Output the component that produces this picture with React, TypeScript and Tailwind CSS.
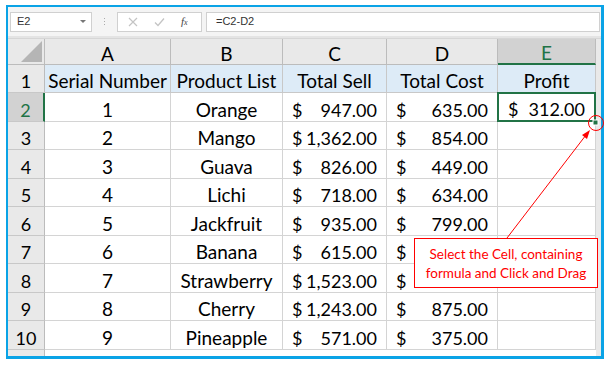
import React from 'react';

const cols = [
  { key: 'A', w: 'w-[126px]' },
  { key: 'B', w: 'w-[112px]' },
  { key: 'C', w: 'w-[104px]' },
  { key: 'D', w: 'w-[111px]' },
  { key: 'E', w: 'w-[98px]' },
];

// cost for Banana / Strawberry sits under the callout, so it is left blank
const rows = [
  { n: 1, name: 'Orange', sell: '947.00', cost: '635.00' },
  { n: 2, name: 'Mango', sell: '1,362.00', cost: '854.00' },
  { n: 3, name: 'Guava', sell: '826.00', cost: '449.00' },
  { n: 4, name: 'Lichi', sell: '718.00', cost: '634.00' },
  { n: 5, name: 'Jackfruit', sell: '935.00', cost: '799.00' },
  { n: 6, name: 'Banana', sell: '615.00', cost: '' },
  { n: 7, name: 'Strawberry', sell: '1,523.00', cost: '' },
  { n: 8, name: 'Cherry', sell: '1,243.00', cost: '875.00' },
  { n: 9, name: 'Pineapple', sell: '571.00', cost: '375.00' },
];

function Money({ value }: { value: string }) {
  return (
    <div className="flex h-full items-end justify-between pl-[9px] pr-[9px] pb-[2px] text-[18px] leading-none">
      <span>$</span>
      <span>{value}</span>
    </div>
  );
}

function RowHead({ label, active, h }: { label: string; active?: boolean; h: string }) {
  return (
    <div
      className={`w-[37px] ${h} flex items-end justify-center pb-[2px] leading-none text-[18px] border-b ${
        active ? 'bg-[#d2d2d2] text-[#217346] border-r-2 border-r-[#217346]' : 'bg-[#e9e9e9] border-r border-r-[#bcbcbc]'
      } border-b-[#c8c8c8]`}
    >
      {label}
    </div>
  );
}

const cell = 'h-full bg-white border-r border-b border-[#d4d4d4]';
const textCell = 'flex items-end justify-center pb-[2px] leading-none text-[19px]';

export default function App() {
  return (
    <div className="w-[611px] h-[366px] bg-white relative overflow-hidden font-['Lato',sans-serif] text-black">
      <div className="absolute left-[6px] top-[5px] w-[598px] h-[354px] border-l-2 border-t-2 border-r-[3px] border-b-[3px] border-[#0aa3e6] bg-[#e9e9e9] flex flex-col overflow-hidden">
        {/* formula bar */}
        <div className="h-[29px] shrink-0 bg-[#f4f4f4] flex items-center pl-[2px] pr-[1px] text-[11px] font-['Liberation_Sans',sans-serif] text-[#333]">
          <div className="w-[82px] h-[20px] bg-white border border-[#d0d0d0] flex items-center justify-between pl-[6px] pr-[5px]">
            <span>E2</span>
            <span className="w-0 h-0 border-l-[3px] border-r-[3px] border-t-[3px] border-l-transparent border-r-transparent border-t-[#777]" />
          </div>
          <div className="w-[25px] flex flex-col items-center gap-[2px]">
            <span className="w-[1px] h-[1px] bg-[#aaa]" />
            <span className="w-[1px] h-[1px] bg-[#aaa]" />
            <span className="w-[1px] h-[1px] bg-[#aaa]" />
          </div>
          <div className="w-[85px] h-[20px] bg-white border border-[#d0d0d0] flex items-center pl-[10px]">
            <svg width="10" height="10" viewBox="0 0 10 10" className="mr-[16px]">
              <path d="M1 1 L9 9 M9 1 L1 9" stroke="#c4c4c4" strokeWidth="1.2" />
            </svg>
            <svg width="11" height="10" viewBox="0 0 11 10" className="mr-[16px]">
              <path d="M1 5.5 L4 8.5 L10 1.5" stroke="#c4c4c4" strokeWidth="1.3" fill="none" />
            </svg>
            <span className="font-['Liberation_Serif',serif] italic text-[#444] text-[11px]">
              f<span className="text-[8px]">x</span>
            </span>
          </div>
          <div className="ml-[4px] flex-1 h-[20px] bg-white border border-[#d0d0d0] flex items-center pl-[9px]">=C2-D2</div>
        </div>
        <div className="h-[2px] shrink-0 bg-[#e4e4e4]" />
        {/* grid */}
        <div className="flex flex-col shrink-0">
          {/* column headers */}
          <div className="flex h-[27px] border-t border-[#d6d6d6]">
            <div className="w-[37px] h-full bg-[#e9e9e9] border-r border-b border-[#bcbcbc] relative">
              <svg width="21" height="21" viewBox="0 0 21 21" className="absolute right-[2px] bottom-[2px]">
                <polygon points="21,0 21,21 0,21" fill="#b5b5b5" />
              </svg>
            </div>
            {cols.map((c) => (
              <div
                key={c.key}
                className={`${c.w} h-full flex items-end justify-center pb-[2px] leading-[17px] text-[19px] border-r ${
                  c.key === 'E'
                    ? 'bg-[#d2d2d2] text-[#217346] border-b-2 border-b-[#217346] border-r-[#bcbcbc]'
                    : 'bg-[#e9e9e9] border-b border-[#bcbcbc]'
                }`}
              >
                {c.key}
              </div>
            ))}
            <div className="flex-1 bg-[#e9e9e9]" />
          </div>
          {/* header row 1 */}
          <div className="flex h-[28px]">
            <RowHead label="1" h="h-[28px]" />
            {['Serial Number', 'Product List', 'Total Sell', 'Total Cost', 'Profit'].map((t, i) => (
              <div
                key={t}
                className={`${cols[i].w} h-full bg-[#ddebf7] border-r border-b border-[#c8c8c8] ${textCell}`}
              >
                {t}
              </div>
            ))}
            <div className="flex-1 bg-[#e9e9e9]" />
          </div>
          {rows.map((r, idx) => {
            const h = idx % 2 === 0 ? 'h-[29px]' : 'h-[28px]';
            return (
              <div key={r.n} className={`flex ${h}`}>
                <RowHead label={String(r.n + 1)} h={h} active={idx === 0} />
                <div className={`${cols[0].w} ${cell} ${textCell}`}>{r.n}</div>
                <div className={`${cols[1].w} ${cell} ${textCell}`}>{r.name}</div>
                <div className={`${cols[2].w} ${cell}`}>
                  <Money value={r.sell} />
                </div>
                <div className={`${cols[3].w} ${cell}`}>
                  <Money value={r.cost} />
                </div>
                <div className={`${cols[4].w} ${cell} relative`}>
                  {idx === 0 && (
                    <div className="absolute -left-[1px] -top-[1px] -right-[1px] -bottom-[1px] border-2 border-[#217346]">
                      <Money value="312.00" />
                    </div>
                  )}
                </div>
                <div className="flex-1 bg-[#e9e9e9]" />
              </div>
            );
          })}
          <div className="flex h-[6px]">
            <div className="w-[37px] h-full bg-[#e9e9e9] border-r border-[#bcbcbc]" />
            <div className="w-[551px] h-full bg-white" />
            <div className="flex-1 bg-[#e9e9e9]" />
          </div>
        </div>
      </div>

      {/* callout */}
      <div className="absolute left-[414px] top-[238px] w-[184px] h-[50px] bg-white border border-[#ff0000] flex flex-col items-center justify-center gap-[3px] text-[13.5px] leading-[16px] text-[#ff0000]">
        <span>Select the Cell, containing</span>
        <span>formula and Click and Drag</span>
      </div>

      <svg className="absolute left-0 top-0 pointer-events-none" width="611" height="366" viewBox="0 0 611 366">
        <rect x="593" y="120" width="5" height="5" fill="#217346" stroke="white" strokeWidth="1" />
        <circle cx="596" cy="123" r="7.5" fill="none" stroke="#ff0000" strokeWidth="1" />
        <line x1="507" y1="238" x2="586" y2="135" stroke="#ff0000" strokeWidth="1" />
        <polygon points="590,130 582,135 587,139" fill="#ff0000" />
      </svg>
    </div>
  );
}
